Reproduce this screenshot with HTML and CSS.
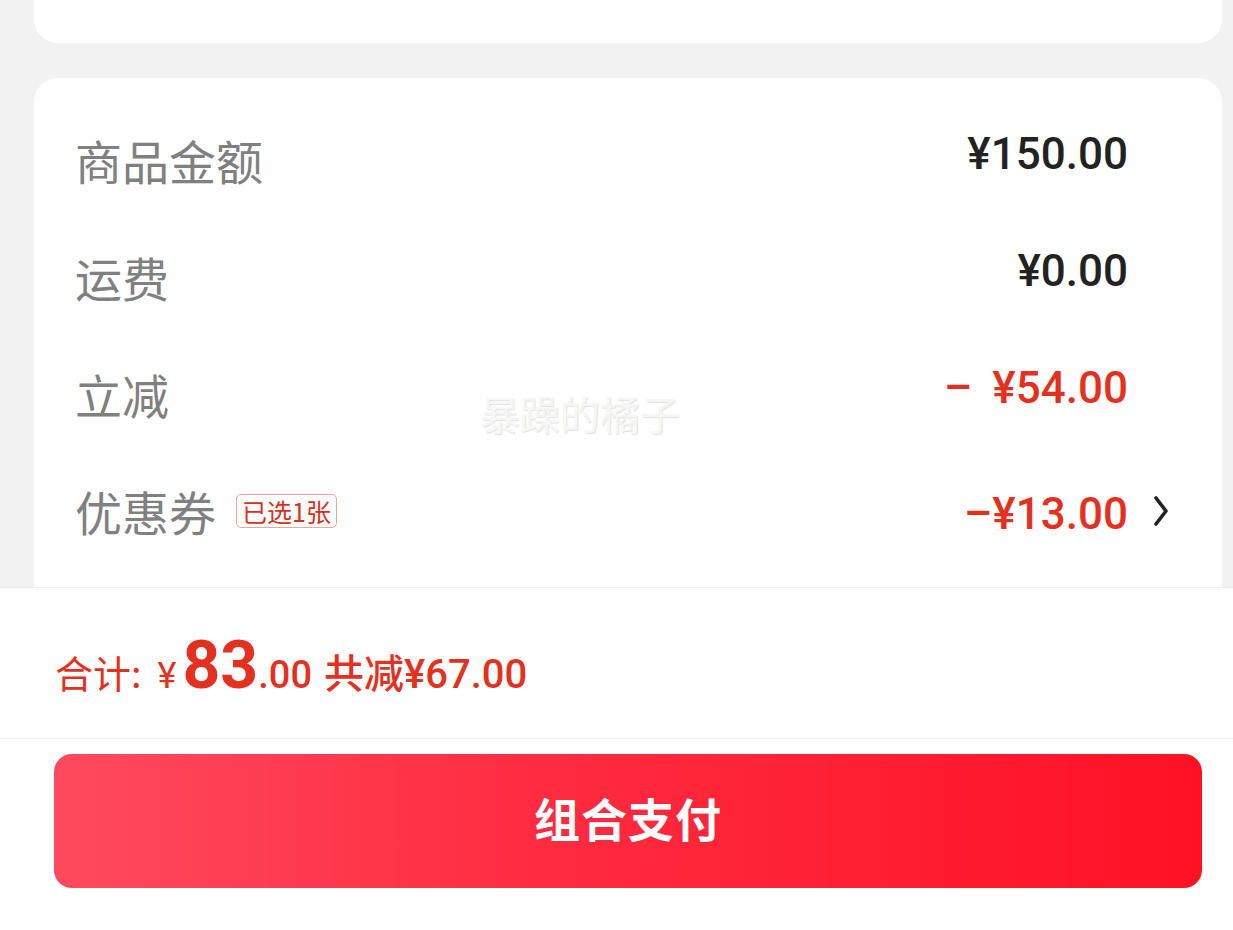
FILE: index.html
```html
<!DOCTYPE html>
<html lang="zh-CN">
<head>
  <meta charset="UTF-8" />
  <title>订单结算</title>
  <link rel="stylesheet" href="styles.css">
</head>
<body>
  <div class="card card-top"></div>

  <div class="card price-card">
    <div class="row">
      <span class="label">商品金额</span>
      <span class="value">¥150.00</span>
    </div>
    <div class="row">
      <span class="label">运费</span>
      <span class="value">¥0.00</span>
    </div>
    <div class="row">
      <span class="label">立减</span>
      <span class="value red"><i class="minus">–</i>¥54.00</span>
    </div>
    <div class="row row-link">
      <span class="label">优惠券 <em class="tag">已选1张</em></span>
      <span class="value red">–¥13.00</span>
      <svg class="arrow" width="18" height="32" viewBox="0 0 18 32">
        <path d="M4 3 L14 16 L4 29" fill="none" stroke="#222" stroke-width="3.6" stroke-linecap="round" stroke-linejoin="round"/>
      </svg>
    </div>
    <div class="watermark">暴躁的橘子</div>
  </div>

  <!-- fixed footer -->
  <div class="footer">
    <div class="total">
      <span class="t-label">合计:</span>
      <span class="t-yen">¥</span><span class="t-int">83</span><span class="t-dec">.00</span>
      <span class="t-save">共减¥67.00</span>
    </div>
    <div class="pay-wrap">
      <button class="pay-btn">组合支付</button>
    </div>
  </div>
</body>
</html>
```

FILE: styles.css
```css
body {
  margin: 0;
  background-color: #f2f2f2;
  font-family: "Noto Sans CJK SC", "Noto Sans", sans-serif;
  height: 930px;
  overflow: hidden;
}

.card {
  background-color: #fff;
  margin: 0 11px 0 34px;
  border-radius: 24px;
}

.card-top {
  height: 43px;
  border-radius: 0 0 24px 24px;
}

.price-card {
  margin-top: 35px;
  padding: 23px 52px 200px 41px;
  position: relative;
}

.row {
  display: flex;
  align-items: center;
  height: 117px;
}

.label {
  flex: 1;
  display: flex;
  align-items: center;
  color: #808080;
  font-size: 47px;
  line-height: 1;
}

.tag {
  font-style: normal;
  font-size: 25px;
  color: #d9301e;
  border: 1px solid #eaa79f;
  border-radius: 5px;
  padding: 2px 5px;
  margin-left: 20px;
  line-height: 28px;
}

.value {
  font-family: Roboto, "Noto Sans", sans-serif;
  font-weight: 500;
  font-size: 44px;
  color: #222;
  margin-right: 42px;
  margin-top: -12px;
}
.value.red {
  color: #e4311f;
}
.minus {
  font-style: normal;
  margin-right: 20px;
}
.row-link .value {
  margin-right: 24px;
  margin-top: 6px;
}

.watermark {
  position: absolute;
  left: 446px;
  top: 306px;
  font-size: 40px;
  color: #f6f6f6;
  text-shadow: 1px 1px 1px #e2e2e2;
}

/* bottom bar */
.footer {
  position: fixed;
  left: 0;
  right: 0;
  bottom: 0;
  height: 342px;
  background-color: #fff;
  border-top: 1px solid #ececec;
}

.total {
  height: 151px;
  display: flex;
  align-items: baseline;
  padding: 39px 55px 0;
  box-sizing: border-box;
  color: #e4311f;
  border-bottom: 1px solid #f2f2f2;
}
.t-label {
  font-size: 38px;
  margin-right: 16px;
}
.t-yen {
  font-family: Roboto, sans-serif;
  font-size: 36px;
  margin-right: 6px;
}
.t-int {
  font-family: Roboto, sans-serif;
  font-weight: 700;
  font-size: 66px;
}
.t-dec {
  font-family: Roboto, sans-serif;
  font-weight: 500;
  font-size: 38px;
  margin-right: 12px;
}
.t-save {
  font-size: 40px;
  font-family: Roboto, "Noto Sans CJK SC", sans-serif;
  font-weight: 500;
}

.pay-wrap {
  padding: 15px 31px 0 54px;
}
.pay-btn {
  width: 100%;
  height: 134px;
  padding-bottom: 10px;
  border: none;
  border-radius: 18px;
  background: linear-gradient(90deg, #ff4a5e 0%, #ff2d42 40%, #ff1124 100%);
  color: #fff;
  font-family: "Noto Sans CJK SC", sans-serif;
  font-weight: 700;
  font-size: 46px;
  letter-spacing: 1px;
}
```
